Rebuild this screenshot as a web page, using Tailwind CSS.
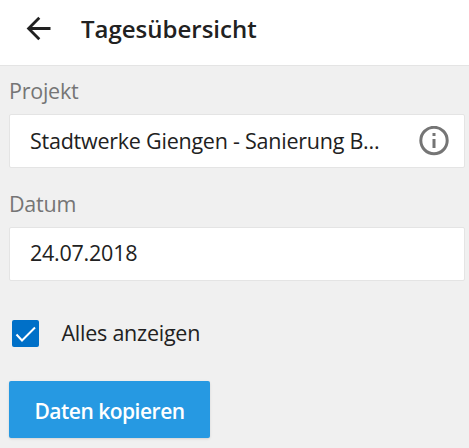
<!doctype html>
<html lang="de">
  <head>
    <meta charset="UTF-8" />
    <meta name="viewport" content="width=device-width, initial-scale=1.0" />
    <title>Tagesübersicht</title>
    <script src="https://cdn.jsdelivr.net/npm/@tailwindcss/browser@4"></script>
  </head>
  <body
    class="h-[448px] overflow-hidden bg-[#f0f0f0] font-['Open_Sans',sans-serif] text-[21.5px] tracking-[-0.24px] text-[#212121]"
  >
    <header
      class="flex h-[66px] items-center border-b border-[#e4e4e4] bg-white pb-2 pl-[26px]"
    >
      <button type="button" aria-label="Zurück">
        <svg
          class="block h-[26px] w-[26px]"
          viewBox="0 0 26 26"
          fill="none"
          stroke="#212121"
          stroke-width="2.8"
        >
          <path d="M24.5 12.5H3M13.3 1.8L2.6 12.5L13.3 23.2" />
        </svg>
      </button>
      <h1 class="ml-[29px] text-2xl font-semibold tracking-normal">
        Tagesübersicht
      </h1>
    </header>

    <main class="pt-[10px] pr-1 pl-[9px]">
      <label class="block h-[30px] leading-[30px] text-[#757575]">Projekt</label>
      <div
        class="mt-2 flex h-[54px] items-center justify-between rounded-xs border border-[#e4e4e4] bg-white pr-[15px] pl-5"
      >
        <span>Stadtwerke Giengen - Sanierung B...</span>
        <svg
          class="mb-px block h-[30px] w-[30px]"
          viewBox="0 0 30 30"
          fill="none"
          stroke="#757575"
          stroke-width="3"
        >
          <circle cx="15" cy="14.5" r="13.2" />
          <path d="M15 13V22M15 7V10" />
        </svg>
      </div>

      <label class="mt-[21px] block h-[30px] leading-[30px] text-[#757575]"
        >Datum</label
      >
      <div
        class="mt-2 flex h-[54px] items-center rounded-xs border border-[#e4e4e4] bg-white pb-px pl-5"
      >
        24.07.2018
      </div>

      <div class="mt-[37px] ml-[3px] flex h-[30px] items-center">
        <span
          class="flex h-[27px] w-[27px] items-center justify-center rounded-xs bg-[#0070c8]"
        >
          <svg
            class="h-[27px] w-[27px]"
            viewBox="0 0 27 27"
            fill="none"
            stroke="white"
            stroke-width="2"
          >
            <path d="M4.5 14.5L10 20.5L23 7.5" />
          </svg>
        </span>
        <span class="ml-[22.5px]">Alles anzeigen</span>
      </div>

      <button
        type="button"
        class="mt-[33px] flex h-[57px] w-[201px] items-center justify-center rounded-xs bg-[#2699e2] pt-[5px] text-[21px] font-semibold tracking-[-0.5px] text-white shadow"
      >
        Daten kopieren
      </button>
    </main>
  </body>
</html>
